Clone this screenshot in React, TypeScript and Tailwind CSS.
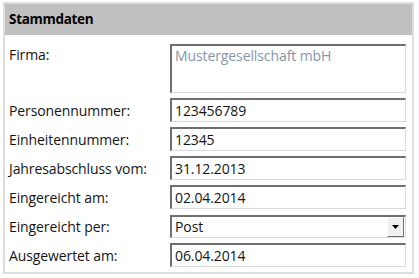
import React from 'react';

const rows: { label: string; value: string; kind?: 'select' }[] = [
  { label: 'Personennummer:', value: '123456789' },
  { label: 'Einheitennummer:', value: '12345' },
  { label: 'Jahresabschluss vom:', value: '31.12.2013' },
  { label: 'Eingereicht am:', value: '02.04.2014' },
  { label: 'Eingereicht per:', value: 'Post', kind: 'select' },
  { label: 'Ausgewertet am:', value: '06.04.2014' },
];

const inset =
  'border-t-2 border-l-2 border-r border-b border-t-[#6f6f6f] border-l-[#6f6f6f] border-r-[#dadada] border-b-[#dadada] bg-white';

export default function App() {
  return (
    <div className="pl-[3px] pt-[2px] bg-white min-h-screen" style={{ fontFamily: '"Open Sans", "Noto Sans", sans-serif' }}>
      <div className="w-[411px] border-2 border-[#dedede] bg-white text-[#141414]">
        {/* Header */}
        <div className="h-[31px] bg-[#c0c0c0] flex items-center pl-[4px] text-[13.5px] font-bold tracking-[-0.3px] text-black">
          Stammdaten
        </div>

        {/* Body */}
        <div className="pl-[4px] pr-[6px] pt-[9px] pb-[5px] flex flex-col gap-[5px] text-[14px] tracking-[-0.1px]">
          <div className="flex">
            <div className="w-[161px] pt-[1px] leading-[19px]">Firma:</div>
            <div className={`flex-1 h-[49px] px-[3px] leading-[19px] text-[#8596ab] ${inset}`}>
              Mustergesellschaft mbH
            </div>
          </div>

          {rows.map((r) => (
            <div key={r.label} className="flex items-center h-[24px]">
              <div className="w-[161px]">{r.label}</div>
              {r.kind === 'select' ? (
                <div className={`flex-1 h-[23px] flex items-center pl-[3px] ${inset}`}>
                  <span className="flex-1">{r.value}</span>
                  <div className="w-[17px] h-[20px] mr-[1px] bg-[#f0f0f0] border border-t-white border-l-white border-r-[#6f6f6f] border-b-[#6f6f6f] flex items-center justify-center">
                    <svg width="7" height="4" viewBox="0 0 7 4">
                      <path d="M0 0h7L3.5 4z" fill="#000" />
                    </svg>
                  </div>
                </div>
              ) : (
                <div className={`flex-1 h-[24px] flex items-center px-[3px] ${inset}`}>{r.value}</div>
              )}
            </div>
          ))}
        </div>
      </div>
    </div>
  );
}
